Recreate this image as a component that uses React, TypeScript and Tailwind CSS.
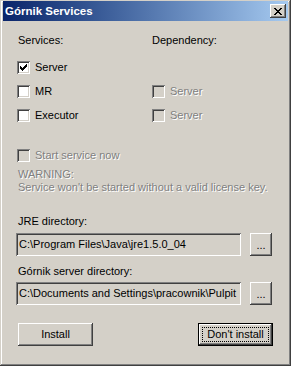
import React from "react";

const CHECK = [
  "......X",
  ".....XX",
  "X...XXX",
  "XX.XXX.",
  "XXXXX..",
  ".XXX...",
  "..X....",
];
const XMARK = [
  "XX....XX",
  ".XX..XX.",
  "..XXXX..",
  "...XX...",
  "..XXXX..",
  ".XX..XX.",
  "XX....XX",
];

function Pixels({ rows, color }: { rows: string[]; color: string }) {
  const w = rows[0].length;
  const h = rows.length;
  const rects: React.ReactElement[] = [];
  rows.forEach((r, y) =>
    r.split("").forEach((c, x) => {
      if (c === "X") rects.push(<rect key={`${x}-${y}`} x={x} y={y} width={1} height={1} fill={color} />);
    })
  );
  return (
    <svg width={w} height={h} viewBox={`0 0 ${w} ${h}`} shapeRendering="crispEdges" className="block">
      {rects}
    </svg>
  );
}

function Checkbox({ checked = false, disabled = false }: { checked?: boolean; disabled?: boolean }) {
  return (
    <span
      className={`relative flex w-[13px] h-[13px] shrink-0 items-center justify-center shadow-[inset_1px_1px_0_#808080,inset_-1px_-1px_0_#ffffff,inset_2px_2px_0_#404040,inset_-2px_-2px_0_#d4d0c8] ${
        disabled ? "bg-[#d4d0c8]" : "bg-white"
      }`}
    >
      {checked && <Pixels rows={CHECK} color={disabled ? "#808080" : "#000000"} />}
    </span>
  );
}

function CheckRow({ label, checked = false, disabled = false }: { label: string; checked?: boolean; disabled?: boolean }) {
  return (
    <div className="flex h-[13px] items-center gap-[5px]">
      <Checkbox checked={checked} disabled={disabled} />
      <span
        className={`leading-[13px] whitespace-nowrap ${
          disabled ? "text-[#808080] [text-shadow:1px_1px_0_#ffffff]" : "text-black"
        }`}
      >
        {label}
      </span>
    </div>
  );
}

const raised =
  "bg-[#d4d0c8] shadow-[inset_-1px_-1px_0_#404040,inset_1px_1px_0_#ffffff,inset_-2px_-2px_0_#808080,inset_2px_2px_0_#d4d0c8]";
const sunken =
  "bg-[#d4d0c8] shadow-[inset_1px_1px_0_#808080,inset_-1px_-1px_0_#ffffff,inset_2px_2px_0_#404040,inset_-2px_-2px_0_#d4d0c8]";

function PathRow({ value }: { value: string }) {
  return (
    <div className="flex gap-[9px]">
      <div className={`flex h-[23px] w-[225px] items-center overflow-hidden pl-[3px] ${sunken}`}>
        <span className="whitespace-nowrap leading-[13px] text-black">{value}</span>
      </div>
      <div className={`flex h-[23px] w-[22px] items-end justify-center pb-[4px] ${raised}`}>
        <span className="leading-[13px] text-black">...</span>
      </div>
    </div>
  );
}

export default function App() {
  return (
    <div className="w-[291px] h-[366px] overflow-hidden bg-[#d4d0c8] font-['Liberation_Sans',Arial,sans-serif] text-[11px] leading-[13px] shadow-[inset_-1px_-1px_0_#404040,inset_1px_1px_0_#d4d0c8,inset_-2px_-2px_0_#808080,inset_2px_2px_0_#ffffff] flex flex-col pt-[1px] px-[3px]">
      {/* Title bar */}
      <div className="flex h-[20px] shrink-0 items-center justify-between bg-linear-to-r from-[#0a246a] to-[#a6caf0] pl-[2px] pr-[2px]">
        <span className="text-[11.5px] font-bold leading-[14px] text-white whitespace-nowrap">Górnik Services</span>
        <div className={`flex h-[14px] w-[16px] items-center justify-center ${raised}`}>
          <Pixels rows={XMARK} color="#000000" />
        </div>
      </div>

      {/* Body */}
      <div className="flex flex-col pl-[14px] pr-[15px]">
        <div className="mt-[13px] grid grid-cols-[135px_1fr]">
          <div className="flex flex-col">
            <span className="pl-[1px]">Services:</span>
            <div className="mt-[14px] flex flex-col gap-[11px]">
              <CheckRow label="Server" checked />
              <CheckRow label="MR" />
              <CheckRow label="Executor" />
            </div>
          </div>
          <div className="flex flex-col">
            <span>Dependency:</span>
            <div className="mt-[14px] flex flex-col gap-[11px]">
              <div className="h-[13px]" />
              <CheckRow label="Server" disabled />
              <CheckRow label="Server" disabled />
            </div>
          </div>
        </div>

        <div className="mt-[27px]">
          <CheckRow label="Start service now" disabled />
        </div>
        <div className="mt-[6px] flex flex-col pl-[1px] text-[#808080] [text-shadow:1px_1px_0_#ffffff]">
          <span>WARNING:</span>
          <span className="whitespace-nowrap">Service won't be started without a valid license key.</span>
        </div>

        <span className="mt-[21px] pl-[1px]">JRE directory:</span>
        <div className="mt-[5px] -ml-[1px]">
          <PathRow value="C:\Program Files\Java\jre1.5.0_04" />
        </div>

        <span className="mt-[9px] pl-[1px]">Górnik server directory:</span>
        <div className="mt-[4px] -ml-[1px]">
          <PathRow value="C:\Documents and Settings\pracownik\Pulpit" />
        </div>

        <div className="mt-[18px] flex justify-between pl-[1px]">
          <div className={`flex h-[23px] w-[75px] items-center justify-center ${raised}`}>
            <span className="text-black">Install</span>
          </div>
          <div className="flex h-[23px] w-[75px] border border-black">
            <div className={`flex flex-1 p-[3px] ${raised}`}>
              <div className="flex flex-1 items-center justify-center border border-dotted border-black">
                <span className="text-black">Don't install</span>
              </div>
            </div>
          </div>
        </div>
      </div>
    </div>
  );
}
